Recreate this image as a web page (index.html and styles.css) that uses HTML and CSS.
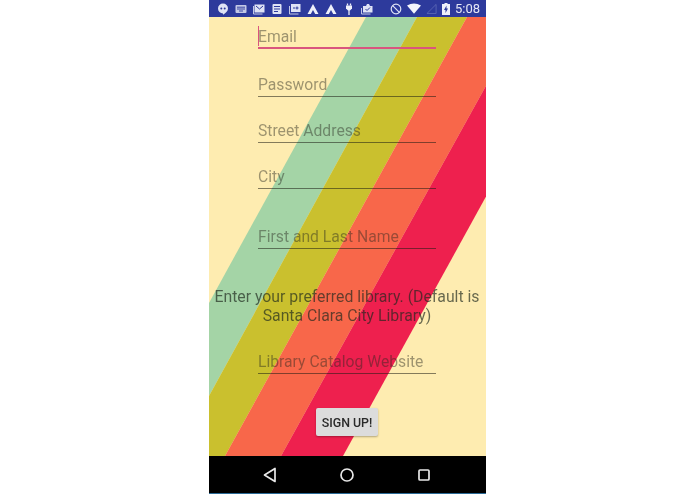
FILE: index.html
```html
<!DOCTYPE html>
<html lang="en">
<head>
<meta charset="utf-8">
<title>Sign up</title>
<link rel="stylesheet" href="styles.css">
</head>
<body>
<div class="phone">
  <header class="status">
    <div class="icons">
      <svg class="ic" viewBox="0 0 12 12"><path fill="#dfe3f5" d="M6 .5a5 5 0 0 1 5 5c0 2.800-2.500 4.800-5 6.200V10.500a5 5 0 0 1 0-10z"/><circle cx="4.300" cy="5.500" r="1" fill="#2d3a9c"/><circle cx="7.700" cy="5.500" r="1" fill="#2d3a9c"/></svg>
      <svg class="ic" viewBox="0 0 12 12"><rect x=".5" y="2" width="11" height="8" rx="1" fill="#c3c8e6"/><path stroke="#2d3a9c" stroke-width=".9" d="M2 4.200h8M2 6h8M4 8h4"/></svg>
      <svg class="ic" viewBox="0 0 12 12"><rect x="1.500" y="1.500" width="10" height="8" fill="#dfe3f5"/><path fill="none" stroke="#2d3a9c" d="M3 3l3.500 3L10 3"/><path fill="none" stroke="#c3c8e6" d="M.5 3v8h9"/></svg>
      <svg class="ic" viewBox="0 0 12 12"><rect x="1.500" y="1" width="9" height="10" rx="1" fill="#dfe3f5"/><path stroke="#2d3a9c" d="M3 3.500h6M3 6h6M3 8.500h4"/></svg>
      <svg class="ic" viewBox="0 0 12 12"><rect x="2" y="1" width="9.500" height="8" fill="#dfe3f5"/><path fill="none" stroke="#c3c8e6" d="M.5 3v8h9"/><path stroke="#2d3a9c" d="M4 5h2M8 3.500v3M6.500 5h3"/></svg>
      <svg class="ic" viewBox="0 0 12 12"><path fill="#eef0fa" d="M6 1l5.500 10H8.200L6 7 3.800 11H.5z"/></svg>
      <svg class="ic" viewBox="0 0 12 12"><path fill="#eef0fa" d="M6 1l5.500 10H8.200L6 7 3.800 11H.5z"/></svg>
      <svg class="ic" viewBox="0 0 12 12"><path fill="#eef0fa" d="M3 2.500h6v3L7 7.500H5L3 5.500z"/><path stroke="#eef0fa" stroke-width="1.300" d="M4.500 .5v2M7.500 .5v2M6 7v5"/></svg>
      <svg class="ic ic-last" viewBox="0 0 12 12"><rect x="2" y="3" width="9.500" height="6.500" fill="#dfe3f5"/><path fill="none" stroke="#c3c8e6" d="M.5 5v6h9"/><path fill="#dfe3f5" d="M5 3l1-2h2l1 2z"/><path fill="none" stroke="#2d3a9c" d="M4.500 6l1.500 1.500 3-3"/></svg>
    </div>
    <div class="icons right">
      <svg class="ic" viewBox="0 0 12 12"><circle cx="6" cy="6" r="4.800" fill="none" stroke="#dfe3f5" stroke-width="1.200"/><path stroke="#dfe3f5" stroke-width="1.200" d="M2.700 2.700l6.600 6.600"/></svg>
      <svg class="wifi" viewBox="0 0 16 12"><path fill="#f4f5fc" d="M0 2.500Q8-2 16 2.500L8 12z"/></svg>
      <svg class="cell" viewBox="0 0 12 12"><path fill="none" stroke="#5a66b3" d="M1 11.500L11 1.500v10z"/></svg>
      <svg class="batt" viewBox="0 0 8 12"><path fill="#eef0fa" d="M2.500 0h3v1H8v11H0V1h2.500z"/><path fill="#2d3a9c" d="M4.500 2.500L2 7h1.500v3L6 5.500H4.500z"/></svg>
      <span class="time">5:08</span>
    </div>
  </header>
  <main class="screen">
    <svg class="stripes" viewBox="0 0 277 439" preserveAspectRatio="none" aria-hidden="true">
      <polygon fill="#a4d4a6" points="157,0 208,0 -33,439 -84,439"/>
      <polygon fill="#cac02e" points="208,0 258,0 16,439 -33,439"/>
      <polygon fill="#f8674a" points="258,0 315,0 72,439 16,439"/>
      <polygon fill="#ee204e" points="315,0 376,0 134,439 72,439"/>
    </svg>
    <form class="form">
      <div class="field focused f-email">Email</div>
      <div class="field f-pass">Password</div>
      <div class="field f-tight">Street Address</div>
      <div class="field f-tight">City</div>
      <div class="field f-name">First and Last Name</div>
      <p class="prompt">Enter your preferred library. (Default is Santa Clara City Library)</p>
      <div class="field f-lib">Library Catalog Website</div>
      <button class="signup" type="button">SIGN UP!</button>
    </form>
  </main>
  <nav class="nav">
    <svg class="nv" viewBox="0 0 20 20"><path fill="none" stroke="#e8e8e8" stroke-width="1.700" stroke-linejoin="round" d="M15 3.500v13L4.500 10z"/></svg>
    <svg class="nv" viewBox="0 0 20 20"><circle cx="10" cy="10" r="6" fill="none" stroke="#e8e8e8" stroke-width="1.700"/></svg>
    <svg class="nv" viewBox="0 0 20 20"><rect x="5" y="5" width="10" height="10" rx="1" fill="none" stroke="#e8e8e8" stroke-width="1.700"/></svg>
  </nav>
</div>
</body>
</html>
```
FILE: styles.css
```css
* { box-sizing: border-box; }
html, body { margin: 0; height: 100%; background: #fff; }
body { display: flex; justify-content: center; font-family: Roboto, "Liberation Sans", sans-serif; }
.phone { width: 277px; height: 494px; display: flex; flex-direction: column; filter: blur(.35px); }
.status { height: 17px; background: #2d3a9c; display: flex; align-items: center; justify-content: space-between; padding: 0 6px 0 8px; flex: none; }
.icons { display: flex; align-items: center; gap: 6px; }
.icons.right { gap: 5px; }
.ic { width: 12px; height: 12px; display: block; }
.wifi { width: 14px; height: 11px; display: block; }
.cell { width: 11px; height: 11px; display: block; }
.batt { width: 8px; height: 12px; display: block; }
.time { color: #e6e8f6; font-size: 13px; }
.screen { height: 439px; flex: none; position: relative; background: #feecb0; overflow: hidden; }
.stripes { position: absolute; inset: 0; width: 100%; height: 100%; }
.form { display: flex; flex-direction: column; align-items: center; height: 100%; position: relative; padding-right: 1px; }
.field { width: 178px; height: 24px; padding-top: 2px; font-size: 15.7px; line-height: 20px; color: rgba(40, 40, 30, .45); border-bottom: 1px solid rgba(30, 30, 20, .55); white-space: nowrap; position: relative; }
.focused { border-bottom: 2px solid #d9557e; height: 25px; padding-top: 3px; }
.focused::before { content: ""; position: absolute; left: 0; top: 2px; width: 1px; height: 20px; background: #d9557e; }
.f-email { margin-top: 7px; }
.f-pass { margin-top: 24px; }
.f-tight { margin-top: 22px; }
.f-name { margin-top: 36px; }
.prompt { width: 277px; margin: 38px 0 0; font-size: 15.8px; line-height: 19px; text-align: center; color: rgba(30, 40, 30, .68); }
.f-lib { margin-top: 25px; }
.signup { margin-top: 34px; width: 62px; height: 28px; border: 0; border-radius: 2px; background: #dcdcdc; color: #2a2a2a; font: 500 12.4px Roboto, "Liberation Sans", sans-serif; padding: 0; box-shadow: 0 1px 2px rgba(0, 0, 0, .3); }
.nav { height: 38px; flex: none; background: #000; display: flex; align-items: center; justify-content: center; gap: 57px; padding-right: 1px; border-bottom: 1px solid #2a6a96; }
.nv { width: 20px; height: 20px; display: block; }
```
